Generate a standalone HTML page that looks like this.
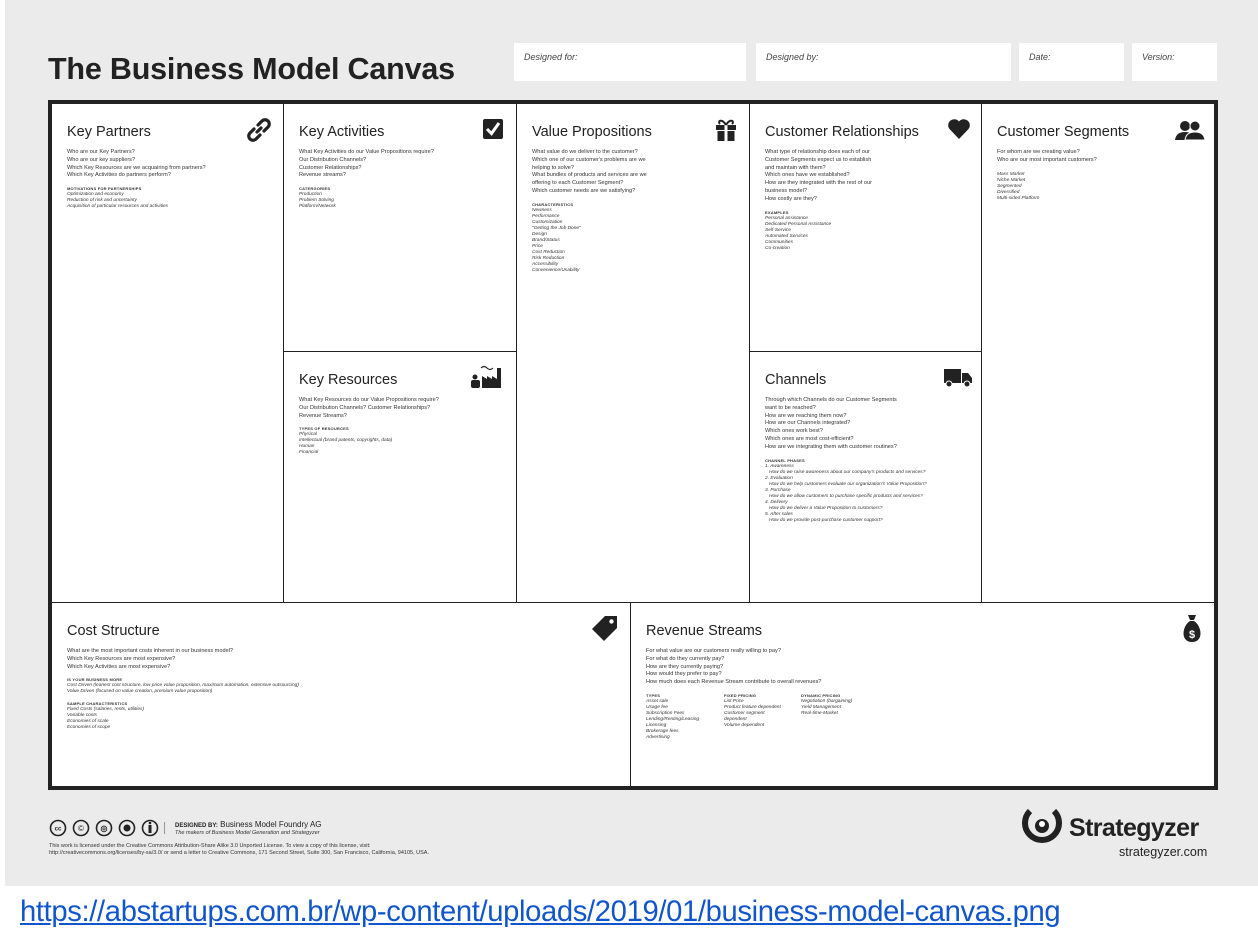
<!DOCTYPE html>
<html><head><meta charset="utf-8"><style>
*{margin:0;padding:0;box-sizing:border-box}
body{width:1258px;height:947px;background:#fff;font-family:"Liberation Sans",sans-serif;position:relative;overflow:hidden;color:#222}
.bg{position:absolute;left:5px;top:0;width:1253px;height:886px;background:#ebebeb}
.h1{position:absolute;left:48px;top:52px;font-size:30.5px;font-weight:bold;color:#222;letter-spacing:-0.2px}
.fld{position:absolute;top:43px;height:38px;background:#fff;font-size:9px;font-style:italic;color:#444;padding:9px 0 0 10px}
.canvas{position:absolute;left:48px;top:100px;width:1170px;height:690px;border:4px solid #222;background:#fff}
.cell{position:absolute;border:1px solid #222}
.t{position:absolute;left:15px;top:20px;font-size:14.5px;color:#222}
.q{position:absolute;left:15px;top:45px;font-size:5.6px;line-height:7.8px;color:#333;white-space:nowrap}
.q b{display:block;font-size:4px;letter-spacing:.2px;margin-top:6px;line-height:6px}
.q i{display:block;font-size:4.8px;line-height:6px}
.ic{position:absolute;top:14px;right:12px}
.link{position:absolute;left:20px;top:896px;font-size:29.2px;color:#1155cc;text-decoration:underline;letter-spacing:-0.35px}
</style></head><body>
<div class="bg"></div>
<div class="h1">The Business Model Canvas</div>
<div class="fld" style="left:514px;width:232px">Designed for:</div>
<div class="fld" style="left:756px;width:255px">Designed by:</div>
<div class="fld" style="left:1019px;width:105px">Date:</div>
<div class="fld" style="left:1132px;width:85px">Version:</div>

<div class="canvas">
<div class="cell" style="left:-1px;top:-1px;width:233px;height:500px">
<div class="t">Key Partners</div>
<svg class="ic" width="24" height="24" viewBox="0 0 24 24"><g fill="none" stroke="#222" stroke-width="3.2" stroke-linecap="round"><path d="M10 14 L14 10"/><path d="M11 7 L15 3 a3.5 3.5 0 0 1 6 6 L17 13"/><path d="M13 17 L9 21 a3.5 3.5 0 0 1 -6 -6 L7 11"/></g></svg>
<div class="q">Who are our Key Partners?<br>Who are our key suppliers?<br>Which Key Resources are we acquairing from partners?<br>Which Key Activities do partners perform?<b>MOTIVATIONS FOR PARTNERSHIPS</b><i>Optimization and economy</i><i>Reduction of risk and uncertainty</i><i>Acquisition of particular resources and activities</i></div>
</div>
<div class="cell" style="left:231px;top:-1px;width:234px;height:249px">
<div class="t">Key Activities</div>
<svg class="ic" width="22" height="22" viewBox="0 0 22 22"><rect x="1" y="1" width="20" height="20" rx="2" fill="#222"/><path d="M5 11 L9.5 15.5 L17 5" fill="none" stroke="#fff" stroke-width="3"/></svg>
<div class="q">What Key Activities do our Value Propositions require?<br>Our Distribution Channels?<br>Customer Relationships?<br>Revenue streams?<b>CATERGORIES</b><i>Production</i><i>Problem Solving</i><i>Platform/Network</i></div>
</div>
<div class="cell" style="left:231px;top:247px;width:234px;height:252px">
<div class="t">Key Resources</div>
<svg class="ic" width="34" height="24" viewBox="0 0 34 24" style="top:12px"><path d="M12 24 V12 L17 15 V12 L22 15 V12 L27 15 V4 H31 V24 Z" fill="#222"/><circle cx="5" cy="13" r="2.5" fill="#222"/><rect x="1" y="16" width="9" height="8" rx="2" fill="#222"/><path d="M11 4 q3 -3 6 0 q3 3 6 0" fill="none" stroke="#222" stroke-width="1.2"/></svg>
<div class="q">What Key Resources do our Value Propositions require?<br>Our Distribution Channels? Customer Relationships?<br>Revenue Streams?<b>TYPES OF RESOURCES</b><i>Physical</i><i>Intellectual (brand patents, copyrights, data)</i><i>Human</i><i>Financial</i></div>
</div>
<div class="cell" style="left:464px;top:-1px;width:234px;height:500px">
<div class="t">Value Propositions</div>
<svg class="ic" width="22" height="24" viewBox="0 0 22 24"><rect x="1" y="7" width="20" height="5" fill="#222"/><rect x="2.5" y="13" width="17" height="10" fill="#222"/><rect x="9.5" y="7" width="3" height="16" fill="#fff"/><path d="M11 7 C7 0 2 3 5 6 M11 7 C15 0 20 3 17 6" fill="none" stroke="#222" stroke-width="2"/></svg>
<div class="q">What value do we deliver to the customer?<br>Which one of our customer's problems are we<br>helping to solve?<br>What bundles of products and services are we<br>offering to each Customer Segment?<br>Which customer needs are we satisfying?<b>CHARACTERISTICS</b><i>Newness</i><i>Performance</i><i>Customization</i><i>"Getting the Job Done"</i><i>Design</i><i>Brand/Status</i><i>Price</i><i>Cost Reduction</i><i>Risk Reduction</i><i>Accessibility</i><i>Convenience/Usability</i></div>
</div>
<div class="cell" style="left:697px;top:-1px;width:233px;height:249px">
<div class="t">Customer Relationships</div>
<svg class="ic" width="24" height="22" viewBox="0 0 24 22" style="right:10px"><path d="M12 21 L2.5 11 A6 6 0 0 1 12 3.5 A6 6 0 0 1 21.5 11 Z" fill="#222"/></svg>
<div class="q">What type of relationship does each of our<br>Customer Segments expect us to establish<br>and maintain with them?<br>Which ones have we established?<br>How are they integrated with the rest of our<br>business model?<br>How costly are they?<b>EXAMPLES</b><i>Personal assistance</i><i>Dedicated Personal Assistance</i><i>Self-Service</i><i>Automated Services</i><i>Communities</i><i>Co-creation</i></div>
</div>
<div class="cell" style="left:697px;top:247px;width:233px;height:252px">
<div class="t">Channels</div>
<svg class="ic" width="30" height="22" viewBox="0 0 30 22" style="right:8px"><rect x="1" y="3" width="17" height="14" fill="#222"/><path d="M19 7 H25 L29 12 V17 H19 Z" fill="#222"/><circle cx="6" cy="18" r="3" fill="#222" stroke="#fff" stroke-width="1"/><circle cx="24" cy="18" r="3" fill="#222" stroke="#fff" stroke-width="1"/></svg>
<div class="q">Through which Channels do our Customer Segments<br>want to be reached?<br>How are we reaching them now?<br>How are our Channels integrated?<br>Which ones work best?<br>Which ones are most cost-efficient?<br>How are we integrating them with customer routines?<b>CHANNEL PHASES</b><i>1. Awareness<br>&nbsp;&nbsp;&nbsp;How do we raise awareness about our company's products and services?</i><i>2. Evaluation<br>&nbsp;&nbsp;&nbsp;How do we help customers evaluate our organization's Value Proposition?</i><i>3. Purchase<br>&nbsp;&nbsp;&nbsp;How do we allow customers to purchase specific products and services?</i><i>4. Delivery<br>&nbsp;&nbsp;&nbsp;How do we deliver a Value Proposition to customers?</i><i>5. After sales<br>&nbsp;&nbsp;&nbsp;How do we provide post-purchase customer support?</i></div>
</div>
<div class="cell" style="left:929px;top:-1px;width:237px;height:500px">
<div class="t">Customer Segments</div>
<svg class="ic" width="30" height="20" viewBox="0 0 30 20" style="top:16px"><circle cx="10" cy="6" r="5" fill="#222"/><path d="M0 20 Q1 12 10 12 Q19 12 20 20 Z" fill="#222"/><circle cx="20" cy="6" r="5" fill="#222" stroke="#fff" stroke-width="1"/><path d="M10 20 Q11 12 20 12 Q29 12 30 20 Z" fill="#222" stroke="#fff" stroke-width="1"/></svg>
<div class="q">For whom are we creating value?<br>Who are our most important customers?<br><br><i>Mass Market</i><i>Niche Market</i><i>Segmented</i><i>Diversified</i><i>Multi-sided Platform</i></div>
</div>
<div class="cell" style="left:-1px;top:498px;width:580px;height:188px">
<div class="t">Cost Structure</div>
<svg class="ic" width="26" height="26" viewBox="0 0 26 26" style="top:12px"><path d="M13 1 H25 V13 L12 26 L0 14 Z" fill="#222"/><circle cx="19.5" cy="6.5" r="2.2" fill="#fff"/></svg>
<div class="q">What are the most important costs inherent in our business model?<br>Which Key Resources are most expensive?<br>Which Key Activities are most expensive?<b>IS YOUR BUSINESS MORE</b><i>Cost Driven (leanest cost structure, low price value proposition, maximum automation, extensive outsourcing)</i><i>Value Driven (focused on value creation, premium value proposition)</i><b>SAMPLE CHARACTERISTICS</b><i>Fixed Costs (salaries, rents, utilities)</i><i>Variable costs</i><i>Economies of scale</i><i>Economies of scope</i></div>
</div>
<div class="cell" style="left:578px;top:498px;width:588px;height:188px">
<div class="t">Revenue Streams</div>
<svg class="ic" width="22" height="30" viewBox="0 0 22 30" style="right:14px;top:11px"><path d="M7 1 H15 L13 6 H9 Z" fill="#222"/><path d="M9 7 H13 C21 12 23 28 11 28 C-1 28 1 12 9 7 Z" fill="#222"/><text x="11" y="24" font-size="11" font-weight="bold" fill="#fff" text-anchor="middle" font-family="Liberation Sans">$</text></svg>
<div class="q">For what value are our customers really willing to pay?<br>For what do they currently pay?<br>How are they currently paying?<br>How would they prefer to pay?<br>How much does each Revenue Stream contribute to overall revenues?</div>
<div class="q" style="top:84px"><b>TYPES</b><i>Asset sale</i><i>Usage fee</i><i>Subscription Fees</i><i>Lending/Renting/Leasing</i><i>Licensing</i><i>Brokerage fees</i><i>Advertising</i></div>
<div class="q" style="top:84px;left:93px"><b>FIXED PRICING</b><i>List Price</i><i>Product feature dependent</i><i>Customer segment</i><i>dependent</i><i>Volume dependent</i></div>
<div class="q" style="top:84px;left:170px"><b>DYNAMIC PRICING</b><i>Negotiation (bargaining)</i><i>Yield Management</i><i>Real-time-Market</i></div>
</div>
</div>

<svg style="position:absolute;left:49px;top:819px" width="110" height="18" viewBox="0 0 110 18"><g fill="none" stroke="#222" stroke-width="1.6"><circle cx="9" cy="9" r="7.5"/><circle cx="32" cy="9" r="7.5"/><circle cx="55" cy="9" r="7.5"/><circle cx="78" cy="9" r="7.5"/><circle cx="101" cy="9" r="7.5"/></g><text x="9" y="11.5" font-size="6" text-anchor="middle" font-weight="bold" fill="#222" font-family="Liberation Sans">cc</text><text x="32" y="12" font-size="8" text-anchor="middle" fill="#222" font-family="Liberation Sans">©</text><text x="55" y="12" font-size="8" text-anchor="middle" fill="#222" font-weight="bold" font-family="Liberation Sans">◎</text><circle cx="78" cy="9" r="3.5" fill="#222"/><rect x="99.5" y="6" width="3" height="8" fill="#222"/><circle cx="101" cy="4" r="1.3" fill="#222"/></svg>
<div style="position:absolute;left:164px;top:822px;width:1px;height:12px;background:#999"></div>
<div style="position:absolute;left:175px;top:820px;font-size:8px;color:#222"><b style="font-size:6px">DESIGNED BY:</b> Business Model Foundry AG</div>
<div style="position:absolute;left:175px;top:830px;font-size:5.5px;font-style:italic;color:#333">The makers of Business Model Generation and Strategyzer</div>
<div style="position:absolute;left:49px;top:843px;font-size:5.5px;line-height:7px;color:#333;white-space:nowrap">This work is licensed under the Creative Commons Attribution-Share Alike 3.0 Unported License. To view a copy of this license, visit:<br>http://creativecommons.org/licenses/by-sa/3.0/ or send a letter to Creative Commons, 171 Second Street, Suite 300, San Francisco, California, 94105, USA.</div>
<svg style="position:absolute;left:1020px;top:806px" width="44" height="40" viewBox="0 0 44 40"><path d="M10 5 A17 17 0 1 0 34 5" fill="none" stroke="#222" stroke-width="6"/><circle cx="22" cy="20" r="7" fill="#222"/><circle cx="22" cy="18" r="3" fill="#fff"/></svg>
<div style="position:absolute;left:1069px;top:814px;font-size:25px;font-weight:bold;color:#222;letter-spacing:-0.6px">Strategyzer</div>
<div style="position:absolute;left:1119px;top:845px;font-size:12.5px;color:#222">strategyzer.com</div>

<div class="link">https://abstartups.com.br/wp-content/uploads/2019/01/business-model-canvas.png</div>
</body></html>
